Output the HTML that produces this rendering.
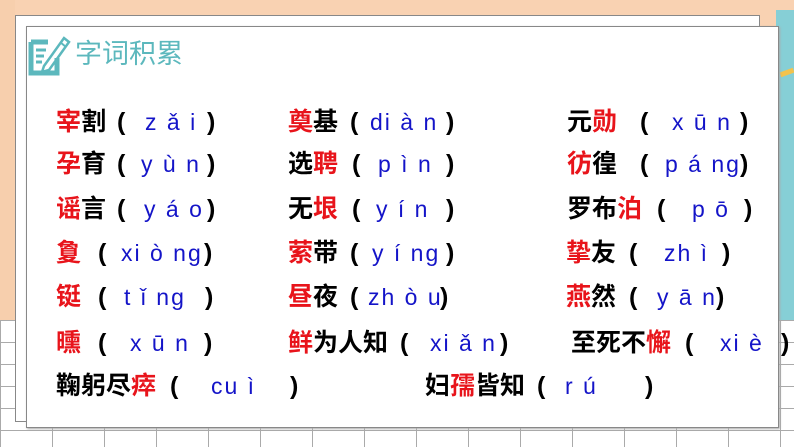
<!DOCTYPE html>
<html><head><meta charset="utf-8"><style>
*{margin:0;padding:0}
body{width:794px;height:447px;overflow:hidden;position:relative;background:#fff;font-family:"Liberation Sans","Noto Sans CJK SC",sans-serif}
.a{position:absolute;white-space:pre;line-height:30px;height:30px}
.c{font-size:25px;font-weight:bold;color:#000}
.r{color:#e8141b}
.p{font-size:23px;color:#1414c8;letter-spacing:2px}
.pa{font-size:25px;font-weight:bold;color:#000}
</style></head><body>
<div style="position:absolute;left:0;top:0;width:794px;height:30px;background:#f9d2b2"></div>
<div style="position:absolute;left:0;top:0;width:15px;height:320px;background:#f7cfad"></div>
<div style="position:absolute;left:0;top:320px;width:794px;height:127px;background:#fff;
background-image:linear-gradient(#aaa 1px,transparent 1px),linear-gradient(90deg,#aaa 1px,transparent 1px);background-size:52px 22px,52px 22px"></div>
<div style="position:absolute;left:776px;top:10px;width:18px;height:310px;background:#86cfd6"></div>
<div style="position:absolute;left:780px;top:70px;width:14px;height:5px;background:#f3c34e;transform:rotate(-20deg)"></div>
<div style="position:absolute;left:15px;top:15px;width:743px;height:405px;background:#fff;border:1px solid #888"></div>
<div style="position:absolute;left:26px;top:26px;width:751px;height:400px;background:#fff;border:1px solid #888;box-shadow:1px 1px 2px #aaa"></div>
<svg style="position:absolute;left:28px;top:30px" width="44" height="46" viewBox="0 0 44 46">
<path d="M3 12 H20 M3 12 V43 H29 V28" stroke="#5cb8bd" stroke-width="5" fill="none"/>
<path d="M8 20h10M8 26h8M8 32h6" stroke="#5cb8bd" stroke-width="3"/>
<path d="M16 36 L36 8 L41 12 L21 40 L14 42 Z" fill="none" stroke="#5cb8bd" stroke-width="2.5"/>
<path d="M32 12 L38 17" stroke="#5cb8bd" stroke-width="2"/>
</svg>
<div class="a" style="left:75px;top:38px;font-size:27px;color:#5cb8bd;line-height:32px">字词积累</div>

<div class="a c" style="left:56px;top:107px"><span class="r">宰</span>割</div>
<div class="a pa" style="left:117px;top:107px">(</div>
<div class="a p" style="left:145px;top:107px">z ǎ i</div>
<div class="a pa" style="left:207px;top:107px">)</div>
<div class="a c" style="left:288px;top:107px"><span class="r">奠</span>基</div>
<div class="a pa" style="left:350px;top:107px">(</div>
<div class="a p" style="left:370px;top:107px">di à n</div>
<div class="a pa" style="left:446px;top:107px">)</div>
<div class="a c" style="left:567px;top:107px">元<span class="r">勋</span></div>
<div class="a pa" style="left:640px;top:107px">(</div>
<div class="a p" style="left:672px;top:107px">x ū n</div>
<div class="a pa" style="left:740px;top:107px">)</div>

<div class="a c" style="left:56px;top:149px"><span class="r">孕</span>育</div>
<div class="a pa" style="left:117px;top:149px">(</div>
<div class="a p" style="left:141px;top:149px">y ù n</div>
<div class="a pa" style="left:207px;top:149px">)</div>
<div class="a c" style="left:288px;top:149px">选<span class="r">聘</span></div>
<div class="a pa" style="left:352px;top:149px">(</div>
<div class="a p" style="left:378px;top:149px">p ì n</div>
<div class="a pa" style="left:446px;top:149px">)</div>
<div class="a c" style="left:567px;top:149px"><span class="r">彷</span>徨</div>
<div class="a pa" style="left:640px;top:149px">(</div>
<div class="a p" style="left:665px;top:149px">p á ng</div>
<div class="a pa" style="left:740px;top:149px">)</div>

<div class="a c" style="left:56px;top:194px"><span class="r">谣</span>言</div>
<div class="a pa" style="left:117px;top:194px">(</div>
<div class="a p" style="left:144px;top:194px">y á o</div>
<div class="a pa" style="left:207px;top:194px">)</div>
<div class="a c" style="left:288px;top:194px">无<span class="r">垠</span></div>
<div class="a pa" style="left:352px;top:194px">(</div>
<div class="a p" style="left:376px;top:194px">y í n</div>
<div class="a pa" style="left:446px;top:194px">)</div>
<div class="a c" style="left:567px;top:194px">罗布<span class="r">泊</span></div>
<div class="a pa" style="left:657px;top:194px">(</div>
<div class="a p" style="left:692px;top:194px">p ō</div>
<div class="a pa" style="left:744px;top:194px">)</div>

<div class="a c" style="left:56px;top:238px"><span class="r">夐</span></div>
<div class="a pa" style="left:98px;top:238px">(</div>
<div class="a p" style="left:121px;top:238px">xi ò ng</div>
<div class="a pa" style="left:204px;top:238px">)</div>
<div class="a c" style="left:288px;top:238px"><span class="r">萦</span>带</div>
<div class="a pa" style="left:350px;top:238px">(</div>
<div class="a p" style="left:372px;top:238px">y í ng</div>
<div class="a pa" style="left:446px;top:238px">)</div>
<div class="a c" style="left:566px;top:238px"><span class="r">挚</span>友</div>
<div class="a pa" style="left:629px;top:238px">(</div>
<div class="a p" style="left:664px;top:238px">zh ì</div>
<div class="a pa" style="left:722px;top:238px">)</div>

<div class="a c" style="left:56px;top:282px"><span class="r">铤</span></div>
<div class="a pa" style="left:98px;top:282px">(</div>
<div class="a p" style="left:124px;top:282px">t ǐ ng</div>
<div class="a pa" style="left:205px;top:282px">)</div>
<div class="a c" style="left:288px;top:282px"><span class="r">昼</span>夜</div>
<div class="a pa" style="left:350px;top:282px">(</div>
<div class="a p" style="left:368px;top:282px">zh ò u</div>
<div class="a pa" style="left:440px;top:282px">)</div>
<div class="a c" style="left:566px;top:282px"><span class="r">燕</span>然</div>
<div class="a pa" style="left:629px;top:282px">(</div>
<div class="a p" style="left:657px;top:282px">y ā n</div>
<div class="a pa" style="left:716px;top:282px">)</div>

<div class="a c" style="left:56px;top:328px"><span class="r">曛</span></div>
<div class="a pa" style="left:98px;top:328px">(</div>
<div class="a p" style="left:130px;top:328px">x ū n</div>
<div class="a pa" style="left:204px;top:328px">)</div>
<div class="a c" style="left:288px;top:328px"><span class="r">鲜</span>为人知</div>
<div class="a pa" style="left:400px;top:328px">(</div>
<div class="a p" style="left:430px;top:328px">xi ǎ n</div>
<div class="a pa" style="left:500px;top:328px">)</div>
<div class="a c" style="left:571px;top:328px">至死不<span class="r">懈</span></div>
<div class="a pa" style="left:685px;top:328px">(</div>
<div class="a p" style="left:720px;top:328px">xi è</div>
<div class="a pa" style="left:781px;top:328px">)</div>

<div class="a c" style="left:56px;top:371px">鞠躬尽<span class="r">瘁</span></div>
<div class="a pa" style="left:170px;top:371px">(</div>
<div class="a p" style="left:211px;top:371px">cu ì</div>
<div class="a pa" style="left:290px;top:371px">)</div>
<div class="a c" style="left:425px;top:371px">妇<span class="r">孺</span>皆知</div>
<div class="a pa" style="left:537px;top:371px">(</div>
<div class="a p" style="left:565px;top:371px">r ú</div>
<div class="a pa" style="left:645px;top:371px">)</div>
</body></html>
